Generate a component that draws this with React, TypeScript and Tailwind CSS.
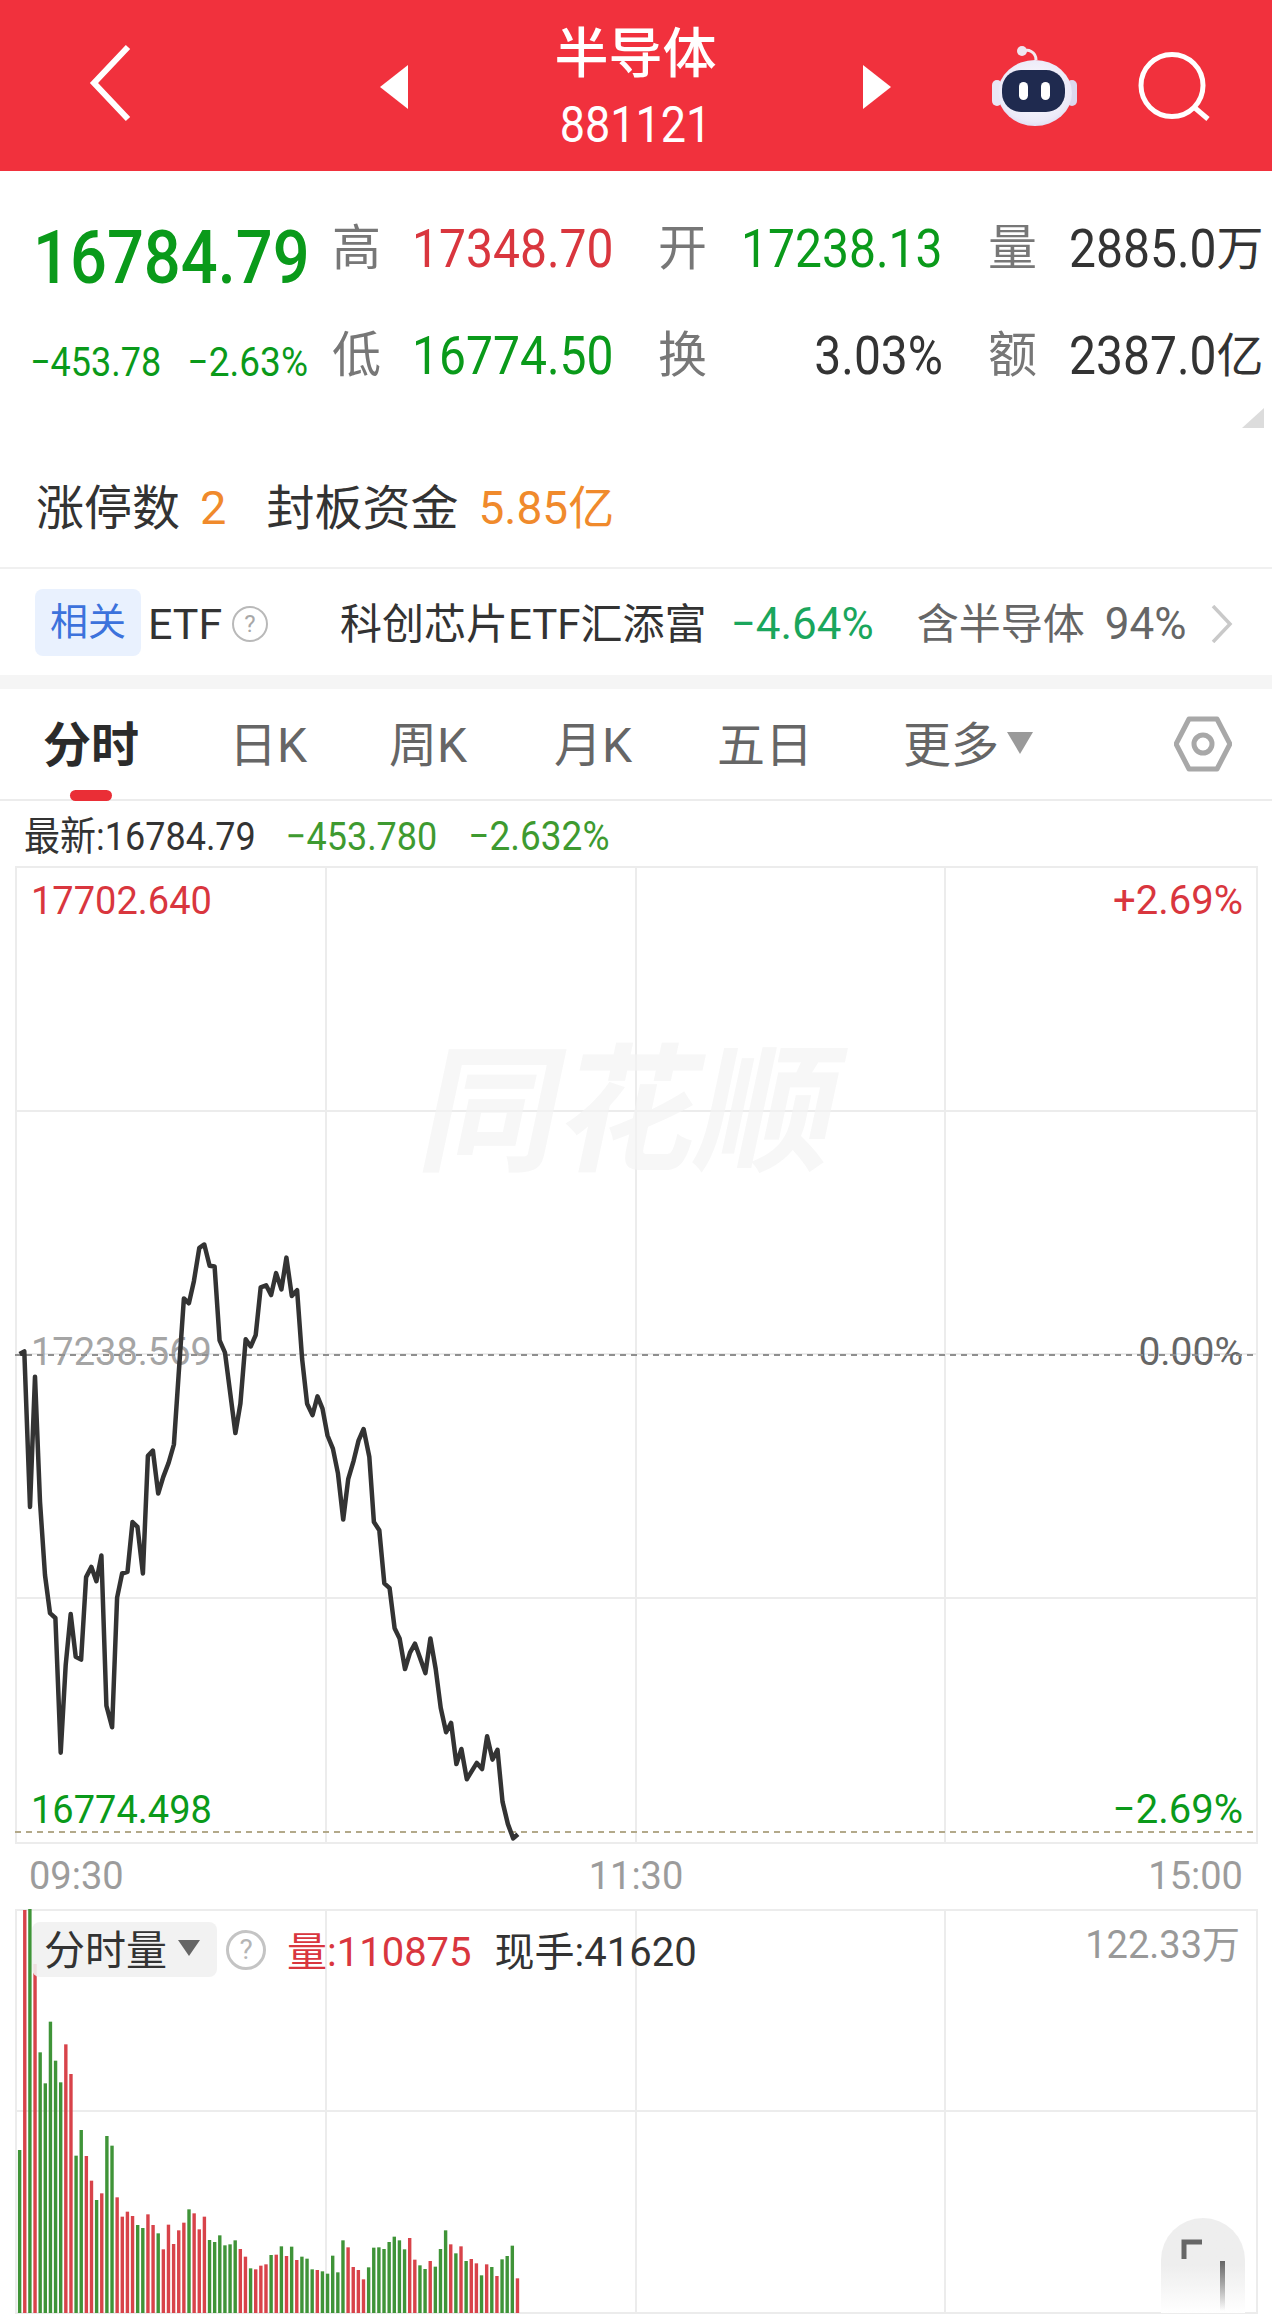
const linePts = [
  [55, 328], [68, 322], [84, 703], [98, 384], [112, 690], [126, 870], [140, 963], [155, 975], [170, 1305], [184, 1090],
  [198, 965], [212, 1070], [227, 1077], [241, 875], [256, 850], [270, 885], [284, 822], [298, 1190], [314, 1243], [328, 925],
  [342, 866], [357, 862], [371, 740], [385, 752], [400, 866], [414, 578], [428, 565], [443, 670], [457, 630], [472, 595],
  [487, 550], [500, 380], [515, 192], [529, 204], [543, 150], [558, 68], [572, 60], [587, 112], [601, 114], [615, 295],
  [630, 325], [659, 522], [673, 450], [688, 292], [702, 310], [716, 282], [730, 165], [745, 160], [759, 184], [773, 130],
  [788, 170], [802, 92], [817, 186], [832, 172], [846, 340], [860, 450], [875, 478], [889, 432], [903, 462], [917, 528],
  [932, 560], [946, 620], [961, 734], [975, 635], [990, 590], [1004, 540], [1018, 512], [1034, 580], [1047, 740], [1062, 760],
  [1076, 890], [1091, 902], [1105, 1000], [1119, 1025], [1134, 1100], [1148, 1060], [1162, 1038], [1191, 1110], [1205, 1025], [1220, 1100],
  [1234, 1195], [1249, 1255], [1263, 1232], [1278, 1333], [1292, 1296], [1307, 1370], [1335, 1330], [1350, 1345], [1364, 1265], [1379, 1322],
  [1393, 1298], [1407, 1425], [1422, 1480], [1437, 1515], [1450, 1505],
]

// r = red, g = green, heights are read off the reference as bar tops
const bars: [number, string][] = [
  [870, "g"], [150, "r"], [145, "g"], [312, "r"], [577, "g"], [670, "g"], [485, "g"], [602, "g"], [667, "g"], [553, "r"],
  [642, "r"], [887, "g"], [810, "g"], [888, "r"], [962, "r"], [1020, "g"], [1000, "r"], [828, "g"], [857, "g"], [1012, "r"],
  [1070, "r"], [1055, "r"], [1068, "r"], [1095, "g"], [1104, "g"], [1063, "r"], [1095, "r"], [1120, "g"], [1168, "r"], [1094, "r"],
  [1152, "r"], [1111, "r"], [1088, "r"], [1048, "g"], [1060, "r"], [1108, "r"], [1070, "r"], [1140, "g"], [1146, "g"], [1126, "g"],
  [1156, "g"], [1153, "g"], [1141, "g"], [1167, "r"], [1190, "r"], [1225, "g"], [1228, "r"], [1217, "r"], [1213, "r"], [1185, "g"],
  [1184, "r"], [1159, "g"], [1188, "r"], [1160, "g"], [1200, "r"], [1190, "g"], [1196, "g"], [1228, "g"], [1230, "r"], [1234, "g"],
  [1241, "g"], [1187, "g"], [1237, "g"], [1141, "g"], [1162, "r"], [1221, "r"], [1230, "r"], [1258, "r"], [1222, "g"], [1163, "g"],
  [1162, "g"], [1167, "g"], [1146, "g"], [1130, "g"], [1141, "g"], [1168, "g"], [1134, "r"], [1199, "r"], [1216, "g"], [1227, "g"],
  [1203, "r"], [1220, "g"], [1167, "g"], [1111, "g"], [1153, "r"], [1180, "g"], [1159, "r"], [1203, "g"], [1197, "r"], [1210, "r"],
  [1246, "g"], [1213, "r"], [1221, "g"], [1248, "r"], [1198, "g"], [1188, "g"], [1157, "g"], [1255, "r"],
]

const GridLines = ({ rows }: { rows: number }) => (
  <div
    className={
      "grid grid-cols-4 h-full w-full border-2 border-[#ececec] " + (rows === 4 ? "grid-rows-4" : "grid-rows-2")
    }
  >
    {Array.from({ length: rows * 4 }).map((_, i) => (
      <div
        key={i}
        className={
          (i % 4 === 3 ? "" : "border-r-2 border-r-[#ececec] ") +
          (i >= (rows - 1) * 4 ? "" : "border-b-2 border-b-[#ececec]")
        }
      />
    ))}
  </div>
)

const Help = ({ big }: { big?: boolean }) => (
  <span
    className={
      big
        ? "flex h-[40px] w-[40px] items-center justify-center rounded-full border-[3px] border-[#c4c4c4] text-[28px] text-[#b5b5b5]"
        : "flex h-[36px] w-[36px] items-center justify-center rounded-full border-2 border-[#b9b9b9] text-[24px] text-[#a8a8a8]"
    }
  >
    ?
  </span>
)

const Robot = () => (
  <svg width="86" height="80" viewBox="0 0 86 80">
    <defs>
      <radialGradient id="head" cx="50%" cy="45%" r="60%">
        <stop offset="0%" stopColor="#ffffff" />
        <stop offset="80%" stopColor="#eceaf8" />
        <stop offset="100%" stopColor="#dbd8f2" />
      </radialGradient>
    </defs>
    <path d="M30 6 C36 2 44 6 44 14" stroke="#f3e9ee" strokeWidth="3" fill="none" />
    <circle cx="30" cy="5" r="5" fill="#eee6f0" />
    <rect x="0" y="34" width="10" height="26" rx="5" fill="#e9e6f5" />
    <rect x="75" y="34" width="10" height="26" rx="5" fill="#dcd8ee" />
    <ellipse cx="43" cy="47" rx="37" ry="33" fill="url(#head)" />
    <rect x="10" y="24" width="63" height="42" rx="19" fill="#1f2a4f" />
    <rect x="27" y="36" width="9" height="18" rx="4.5" fill="#ffffff" />
    <rect x="49" y="36" width="9" height="18" rx="4.5" fill="#ffffff" />
  </svg>
)

export default function App() {
  const line = linePts.map(([x, y]) => `${(x / 2.8).toFixed(1)},${(1220 + y / 2.45 - 866).toFixed(1)}`).join(" ")

  return (
    <div className="h-[2324px] w-[1272px] overflow-hidden bg-white font-[family-name:Roboto,'Noto_Sans_CJK_SC',sans-serif]">
      {/* top bar */}
      <div className="flex h-[171px] items-center bg-[#f1313d] text-white">
        <svg className="ml-[86px] -mt-[6px]" width="48" height="80" viewBox="0 0 48 80">
          <path d="M42 4 L8 40 L42 76" stroke="#fff" strokeWidth="6" fill="none" />
        </svg>
        <svg className="ml-[246px] mt-[2px]" width="28" height="44" viewBox="0 0 28 44">
          <path d="M28 0 V44 L0 22 Z" fill="#fff" />
        </svg>
        <div className="flex w-[455px] flex-col items-center">
          <div className="text-[54px] leading-[64px] font-medium">半导体</div>
          <div className="mt-[16px] scale-y-[1.1] text-[45px] leading-[46px]">881121</div>
        </div>
        <svg className="mt-[2px]" width="28" height="44" viewBox="0 0 28 44">
          <path d="M0 0 V44 L28 22 Z" fill="#fff" />
        </svg>
        <div className="ml-[101px]">
          <Robot />
        </div>
        <svg className="ml-[58px] mt-[8px]" width="76" height="76" viewBox="0 0 76 76">
          <circle cx="36" cy="33.5" r="31" stroke="#fff" strokeWidth="5" fill="none" />
          <path d="M59 56 L72 67" stroke="#fff" strokeWidth="5" fill="none" />
        </svg>
      </div>

      {/* quote block */}
      <div className="border-b-2 border-[#f0f0f0]">
        <div className="flex pt-[24px]">
          <div className="w-[332px] pl-[33px]">
            <div className="flex h-[107px] items-center pt-[20px] text-[65px] font-medium text-[#0a9a1a]">
              <span className="inline-block scale-y-[1.15]">16784.79</span>
            </div>
            <div className="flex h-[107px] w-[278px] -ml-[3px] items-center justify-between pt-[14px] text-[36px] text-[#0a9a1a]">
              <span className="inline-block scale-y-[1.12]">−453.78</span>
              <span className="inline-block scale-y-[1.12] text-[37px]">−2.63%</span>
            </div>
          </div>
          <div className="grid grid-cols-[80px_246px_83px_247px_81px_203px] grid-rows-[107px_107px] items-center whitespace-nowrap text-[48px] text-[#333]">
            <span className="text-[49px] text-[#777]">高</span>
            <span className="inline-block scale-y-[1.12] text-[#d9363e]">17348.70</span>
            <span className="text-[49px] text-[#777]">开</span>
            <span className="inline-block scale-y-[1.12] text-[#0a9a1a]">17238.13</span>
            <span className="text-[49px] text-[#777]">量</span>
            <span>
              <span className="inline-block scale-y-[1.12]">2885.0</span>
              <span className="text-[47px]">万</span>
            </span>
            <span className="text-[49px] text-[#777]">低</span>
            <span className="inline-block scale-y-[1.12] text-[#0a9a1a]">16774.50</span>
            <span className="text-[49px] text-[#777]">换</span>
            <span className="inline-block scale-y-[1.12] pr-[45px] text-right">3.03%</span>
            <span className="text-[49px] text-[#777]">额</span>
            <span>
              <span className="inline-block scale-y-[1.12]">2387.0</span>
              <span className="text-[47px]">亿</span>
            </span>
          </div>
        </div>
        <div className="flex h-[36px] justify-end pr-[8px]">
          <svg width="22" height="20" viewBox="0 0 22 20" className="-mt-[1px]">
            <path d="M22 0 V20 H0 Z" fill="#dcdcdc" />
          </svg>
        </div>
        <div className="flex h-[122px] items-center pl-[36px] pt-[5px] text-[48px] text-[#333]">
          <span>涨停数</span>
          <span className="ml-[20px] text-[47px] text-[#f08a2c]">2</span>
          <span className="ml-[40px]">封板资金</span>
          <span className="ml-[20px] text-[46px] text-[#f08a2c]">5.85亿</span>
        </div>
      </div>

      {/* related ETF */}
      <div className="flex h-[106px] items-center pl-[35px] whitespace-nowrap text-[#333]">
        <span className="flex h-[67px] w-[106px] items-center justify-center rounded-[8px] bg-[#e9f1fe] text-[38px] text-[#3c72dc]">
          相关
        </span>
        <div className="flex items-center pt-[4px]">
          <span className="ml-[7px] w-[84px] text-[43px]">ETF</span>
          <Help />
          <span className="ml-[72px] text-[42px]">科创芯片ETF汇添富</span>
          <span className="ml-[24px] text-[44px] text-[#1aa65c]">−4.64%</span>
          <span className="ml-[43px] text-[42px] text-[#666]">含半导体</span>
          <span className="ml-[20px] text-[44px] text-[#666]">94%</span>
          <svg className="ml-[24px]" width="24" height="38" viewBox="0 0 24 38">
            <path d="M3 1 L20 19 L3 37" stroke="#c9c9c9" strokeWidth="3.5" fill="none" />
          </svg>
        </div>
      </div>
      <div className="h-[14px] bg-[#f5f5f5]" />

      {/* period tabs */}
      <div className="relative grid h-[112px] grid-cols-[186px_160px_165px_163px_186px_270px_1fr] items-center border-b-2 border-[#ececec] pl-[43px] pt-[4px] text-[48px] text-[#666]">
        <span className="font-bold text-[#2b2b2b]">分时</span>
        <span>日K</span>
        <span>周K</span>
        <span>月K</span>
        <span>五日</span>
        <span className="flex items-center">
          更多
          <svg className="ml-[8px] -mt-[6px]" width="26" height="22" viewBox="0 0 26 22">
            <path d="M0 0 H26 L13 22 Z" fill="#9a9a9a" />
          </svg>
        </span>
        <svg width="58" height="58" viewBox="0 0 58 58" className="ml-[1px] -mt-[4px]">
          <path d="M15 4 H43 L56 29 L43 54 H15 L2 29 Z" stroke="#a8a8a8" strokeWidth="5" strokeLinejoin="round" fill="none" />
          <circle cx="29" cy="29" r="9" stroke="#a8a8a8" strokeWidth="5" fill="none" />
        </svg>
        <div className="absolute -bottom-[2px] left-[70px] h-[11px] w-[42px] rounded-full bg-[#ea2e36]" />
      </div>

      {/* latest */}
      <div className="flex h-[65px] items-center pl-[24px] pt-[6px] text-[37px] whitespace-nowrap text-[#333]">
        <span className="inline-block scale-y-[1.1] text-[36px]">最新:16784.79</span>
        <span className="ml-[30px] inline-block scale-y-[1.1] text-[36px] text-[#3e9a30]">−453.780</span>
        <span className="ml-[31px] inline-block scale-y-[1.1] text-[#3e9a30]">−2.632%</span>
      </div>

      {/* price chart */}
      <div className="relative h-[978px] w-[1272px]">
        <div className="absolute left-[15px] top-0 h-[978px] w-[1243px]">
          <GridLines rows={4} />
        </div>
        <div className="absolute left-[425px] top-[167px] -skew-x-12 text-[138px] leading-[160px] font-bold text-[#f4f4f4] opacity-70">
          同花顺
        </div>
        <span className="absolute left-[31px] top-[12px] text-[38px] leading-[46px] text-[#d9363e]">17702.640</span>
        <span className="absolute right-[29px] top-[12px] text-[40px] leading-[46px] text-[#d9363e]">+2.69%</span>
        <span className="absolute left-[31px] top-[463px] text-[38px] leading-[46px] text-[#a5a5a5]">17238.569</span>
        <span className="absolute right-[29px] top-[463px] text-[39px] leading-[46px] text-[#666]">0.00%</span>
        <span className="absolute left-[31px] top-[921px] text-[38px] leading-[46px] text-[#0a9a1a]">16774.498</span>
        <span className="absolute right-[29px] top-[921px] text-[40px] leading-[46px] text-[#0a9a1a]">−2.69%</span>
        <svg className="absolute left-0 top-0" width="1272" height="978" viewBox="0 0 1272 978">
          <path d="M15 489 H1257" stroke="#8f8f8f" strokeWidth="2" strokeDasharray="6 5" />
          <path d="M15 966 H1257" stroke="#b3a98a" strokeWidth="2" strokeDasharray="6 5" />
          <polyline points={line} fill="none" stroke="#333" strokeWidth="4.5" strokeLinejoin="round" />
        </svg>
      </div>

      {/* time axis */}
      <div className="flex h-[65px] items-center justify-between pl-[29px] pr-[29px] text-[38px] text-[#9c9c9c]">
        <span>09:30</span>
        <span>11:30</span>
        <span>15:00</span>
      </div>

      {/* volume chart */}
      <div className="relative h-[405px] w-[1272px]">
        <div className="absolute left-[15px] top-0 h-[405px] w-[1243px]">
          <GridLines rows={2} />
        </div>
        <svg className="absolute left-0 top-0" width="1272" height="405" viewBox="0 0 1272 405">
          {bars.map(([top, c], i) => {
            const y = top / 3 + 1860 - 1909
            return (
              <rect
                key={i}
                x={(55 + 14.37 * i) / 2.8 - 1.7}
                y={y}
                width="3.4"
                height={404 - y}
                fill={c === "g" ? "#3f9438" : "#d8434a"}
              />
            )
          })}
        </svg>
        <div className="absolute left-[32px] top-[13px] flex h-[55px] w-[185px] items-center rounded-[8px] bg-[#f1f1f1]/90 pl-[12px] pt-[4px] text-[41px] text-[#333]">
          分时量
          <svg className="ml-[11px] -mt-[8px]" width="22" height="16" viewBox="0 0 22 16">
            <path d="M0 0 H22 L11 16 Z" fill="#666" />
          </svg>
        </div>
        <div className="absolute left-[226px] top-[21px]">
          <Help big />
        </div>
        <div className="absolute left-[287px] top-[20px] flex items-center whitespace-nowrap text-[40px] leading-[48px]">
          <span className="text-[#d9363e]">量:110875</span>
          <span className="ml-[23px] text-[#333]">现手:41620</span>
        </div>
        <span className="absolute right-[32px] top-[13px] text-[38px] leading-[46px] text-[#999]">122.33万</span>
        <div className="absolute left-[1161px] top-[309px] h-[95px] w-[84px] rounded-t-full bg-gradient-to-b from-[#eeeeee] via-[#eeeeee] to-[#ffffff]" />
        <svg className="absolute left-[1178px] top-[325px]" width="50" height="80" viewBox="0 0 50 80">
          <defs>
            <linearGradient id="fade" x1="0" y1="0" x2="0" y2="1">
              <stop offset="0%" stopColor="#666" />
              <stop offset="100%" stopColor="#666" stopOpacity="0" />
            </linearGradient>
          </defs>
          <path d="M6 25 V8 H24" stroke="#666" strokeWidth="5" fill="none" />
          <rect x="42" y="27" width="5" height="50" fill="url(#fade)" />
        </svg>
      </div>
    </div>
  )
}
